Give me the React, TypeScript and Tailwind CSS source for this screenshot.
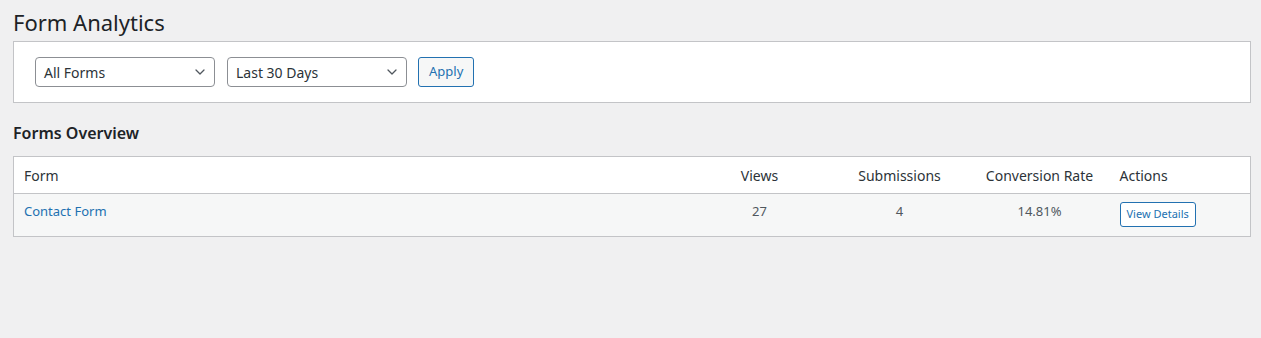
import React from "react";

const Chevron: React.FC = () => (
  <svg width="16" height="16" viewBox="0 0 20 20" className="absolute right-[6px] top-1/2 -translate-y-1/2 text-[#50575e]">
    <path d="M5 7.5l5 5 5-5" fill="none" stroke="currentColor" strokeWidth="1.6" strokeLinecap="round" strokeLinejoin="round" />
  </svg>
);

const SelectBox: React.FC<{ label: string }> = ({ label }) => (
  <div className="relative w-[180px] h-[30px] border border-[#8c8f94] rounded-[4px] bg-white flex items-center pl-[8px] text-[14px] text-[#2c3338]">
    {label}
    <Chevron />
  </div>
);

const rows = [{ name: "Contact Form", views: 27, subs: 4, rate: "14.81%" }];

export default function App() {
  return (
    <div
      className="min-h-[338px] bg-[#f0f0f1] pl-[13px] pr-[10px] text-[#3c434a]"
      style={{ fontFamily: '"Noto Sans", "Open Sans", sans-serif' }}
    >
      <h1 className="text-[22px] leading-[30px] pt-[7px] pb-[4px] text-[#1d2327] font-normal">Form Analytics</h1>

      {/* filters */}
      <div className="bg-white border border-[#c3c4c7] px-[21px] py-[15px] flex items-center gap-[12px]">
        <SelectBox label="All Forms" />
        <SelectBox label="Last 30 Days" />
        <button className="h-[30px] px-[10px] ml-[-1px] border border-[#2271b1] rounded-[3px] bg-[#f6f7f7] text-[#2271b1] text-[13px]">
          Apply
        </button>
      </div>

      <h2 className="text-[16px] font-semibold text-[#1d2327] mt-[19px] mb-[12px] leading-[22px]">Forms Overview</h2>

      <table className="w-full border border-[#c3c4c7] bg-white border-collapse">
        <thead>
          <tr className="border-b border-[#c3c4c7] text-[14px] text-[#2c3338] h-[37px]">
            <th className="font-normal text-left pl-[10px] w-[676px]">Form</th>
            <th className="font-normal text-center w-[140px]">Views</th>
            <th className="font-normal text-center w-[140px]">Submissions</th>
            <th className="font-normal text-center w-[140px]">Conversion Rate</th>
            <th className="font-normal text-left pl-[10px]">Actions</th>
          </tr>
        </thead>
        <tbody>
          {rows.map((r) => (
            <tr key={r.name} className="bg-[#f6f7f7] h-[43px] text-[13px] text-[#50575e]">
              <td className="pl-[10px] align-top pt-[8px] text-[#2271b1]">{r.name}</td>
              <td className="text-center align-top pt-[8px]">{r.views}</td>
              <td className="text-center align-top pt-[8px]">{r.subs}</td>
              <td className="text-center align-top pt-[8px]">{r.rate}</td>
              <td className="pl-[10px] align-top pt-[8px]">
                <button className="h-[25px] px-[6px] border border-[#2271b1] rounded-[3px] bg-white text-[#2271b1] text-[11px]">
                  View Details
                </button>
              </td>
            </tr>
          ))}
        </tbody>
      </table>
    </div>
  );
}
